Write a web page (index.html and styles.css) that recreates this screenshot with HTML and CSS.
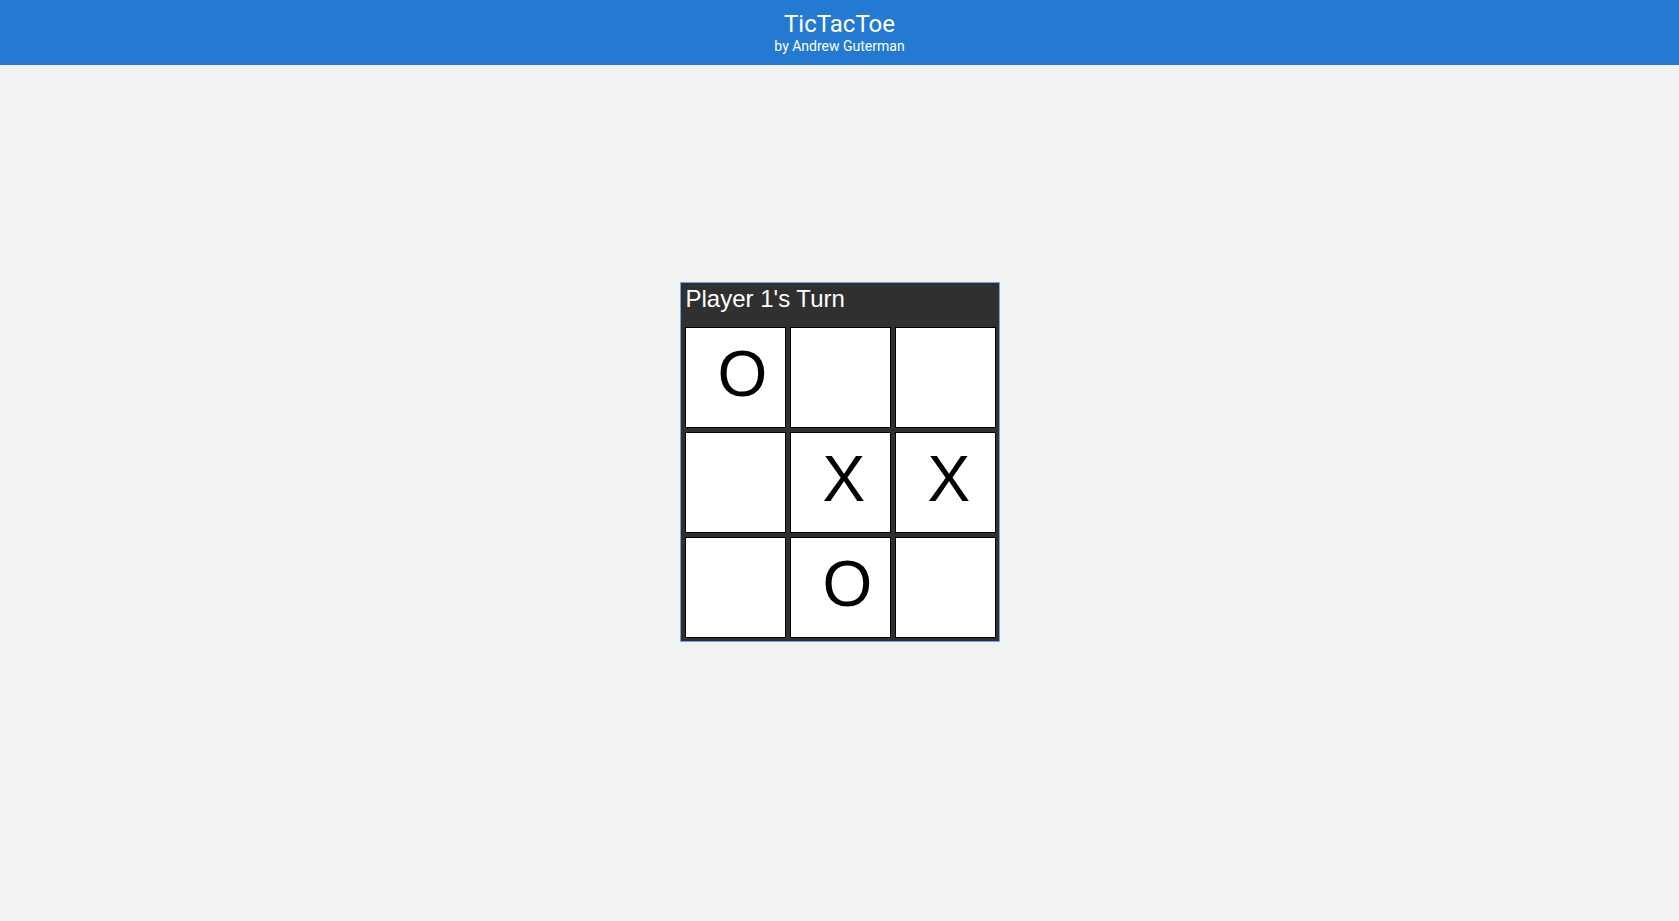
FILE: index.html
```html
<!DOCTYPE html>
<html>
<head>
<meta charset="utf-8">
<title>TicTacToe</title>
<link rel="stylesheet" href="styles.css">
</head>
<body>
<header class="app-header">
  <div class="app-title">TicTacToe</div>
  <div class="app-author">by Andrew Guterman</div>
</header>
<main class="stage">
  <div class="board">
    <div class="board-status">Player 1's Turn</div>
    <div class="grid">
      <div class="cell">O</div>
      <div class="cell"></div>
      <div class="cell"></div>
      <div class="cell"></div>
      <div class="cell">X</div>
      <div class="cell">X</div>
      <div class="cell"></div>
      <div class="cell">O</div>
      <div class="cell"></div>
    </div>
  </div>
</main>
</body>
</html>
```
FILE: styles.css
```css
html, body {
  margin: 0;
  padding: 0;
}
body {
  background: #f2f2f2;
  font-family: Roboto, "Liberation Sans", sans-serif;
  min-height: 921px;
}
.app-header {
  height: 65px;
  box-sizing: border-box;
  padding-top: 10px;
  background: #2479d3;
  color: #ffffff;
  text-align: center;
}
.app-title {
  font-family: Roboto, sans-serif;
  font-size: 24px;
  line-height: 28px;
}
.app-author {
  font-family: Roboto, sans-serif;
  font-size: 14px;
  line-height: 16px;
}
.stage {
  display: flex;
  justify-content: center;
  padding-top: 217px;
}
.board {
  width: 320px;
  box-sizing: border-box;
  border: 1px solid #6fa3ea;
  background: #303030;
  padding: 0 3px 3px 4px;
}
.board-status {
  height: 44px;
  box-sizing: border-box;
  padding: 2px 0 0 1px;
  font-family: "Liberation Sans", Arial, sans-serif;
  font-size: 24px;
  color: #ffffff;
}
.grid {
  display: grid;
  grid-template-columns: repeat(3, 101px);
  grid-auto-rows: 101px;
  gap: 4px;
}
.cell {
  box-sizing: border-box;
  background: #ffffff;
  border: 1px solid #000000;
  padding: 9px 0 0 32px;
  font-family: "Liberation Sans", Arial, sans-serif;
  font-size: 64px;
  line-height: normal;
  color: #000000;
}
```
